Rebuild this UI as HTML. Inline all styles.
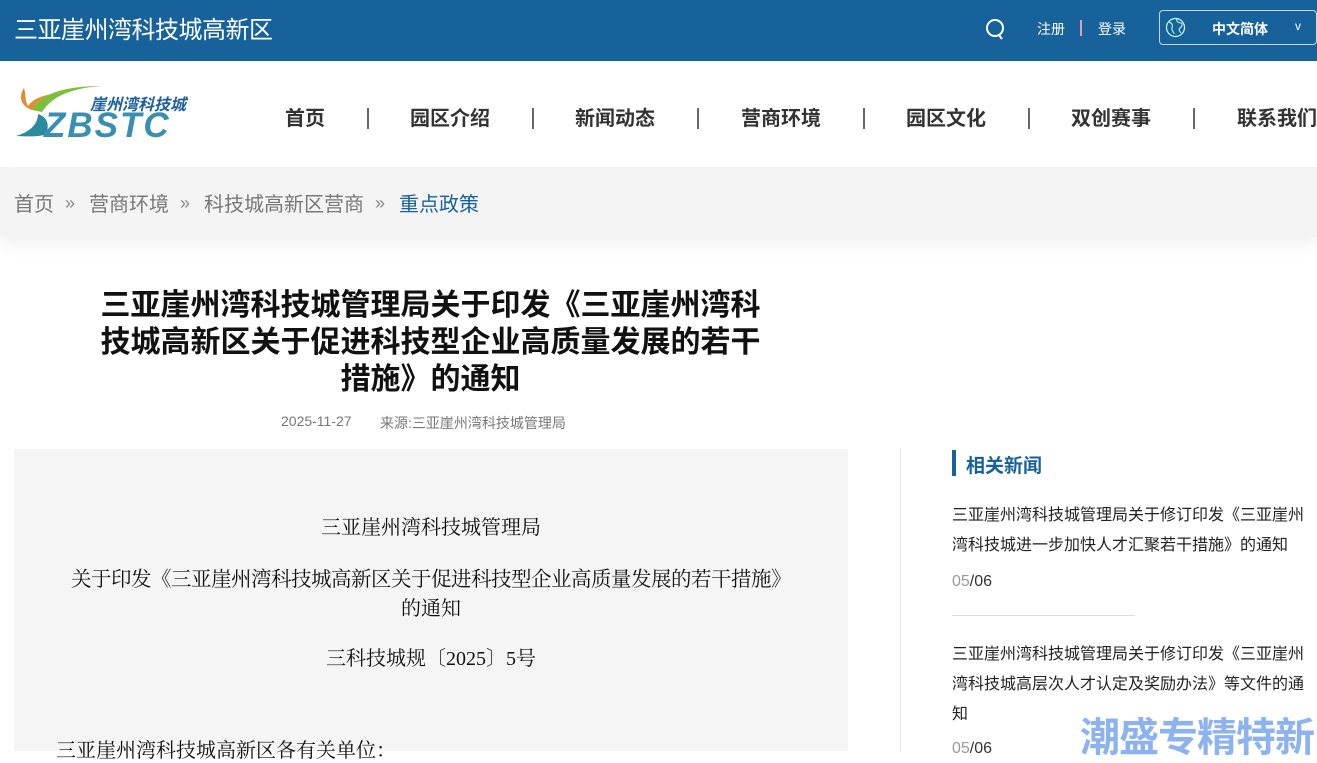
<!DOCTYPE html>
<html><head><meta charset="utf-8"><style>
*{margin:0;padding:0;box-sizing:border-box}
body{width:1317px;height:751px;overflow:hidden;background:#fff;font-family:"Liberation Sans","Noto Sans CJK SC",sans-serif;position:relative;color:#222}
.top{position:absolute;left:0;top:0;width:1317px;height:61px;background:#17629a;color:#fff}
.top .t{position:absolute;left:14px;top:10px;font-size:24px;letter-spacing:-0.5px}
.abs{position:absolute}
.nav{position:absolute;top:102px;font-size:20px;font-weight:bold;color:#333}
.sep{position:absolute;top:108px;width:2px;height:21px;background:#666}
.crumb{position:absolute;left:0;top:167px;width:1317px;height:70px;background:#f4f4f4;box-shadow:0 8px 16px rgba(0,0,0,0.06)}
.crumb span{position:absolute;top:21px;font-size:20px;color:#777}
.crumb b{position:absolute;top:26px;font-size:18px;font-weight:normal;color:#888;font-family:"Liberation Sans",sans-serif}
h1{position:absolute;left:98px;top:287px;width:665px;text-align:center;font-size:30px;line-height:37px;font-weight:bold;color:#111}
.meta{position:absolute;top:413px;font-size:14px;color:#777}
.box{position:absolute;left:14px;top:449px;width:834px;height:302px;background:#f5f5f5;font-family:"Liberation Serif","Noto Serif CJK SC",serif;color:#111}
.box div{position:absolute;width:834px;text-align:center;font-size:20px}
.vl{position:absolute;left:900px;top:449px;width:1px;height:302px;background:#e5e5e5}
.rn{position:absolute;left:952px;width:356px;font-size:16px;line-height:30px;color:#222}
.dt{position:absolute;left:952px;font-size:16px;color:#333}
</style></head><body>
<div class="top"><div class="t">三亚崖州湾科技城高新区</div>
<svg class="abs" style="left:985px;top:18px" width="22" height="24" viewBox="0 0 22 24"><circle cx="10" cy="10" r="8" fill="none" stroke="#fff" stroke-width="2"/><path d="M14 17l3 4" stroke="#fff" stroke-width="2"/></svg>
<div class="abs" style="left:1037px;top:19px;font-size:14px">注册</div>
<div class="abs" style="left:1080px;top:20px;width:2px;height:16px;background:#e0a0b0"></div>
<div class="abs" style="left:1098px;top:19px;font-size:14px">登录</div>
<div class="abs" style="left:1159px;top:10px;width:158px;height:35px;border:1px solid #c9d8e6;border-radius:4px"></div>
<svg class="abs" style="left:1165px;top:17px" width="21" height="21" viewBox="0 0 21 21"><circle cx="10.5" cy="10.5" r="9" fill="none" stroke="#cfe" stroke-width="1.2"/><path d="M4 5c3 1 4 3 3 6s2 3 2 6M12 2c-1 3 2 4 4 4s1 4-1 5 0 4 1 5" fill="none" stroke="#cfe" stroke-width="1"/></svg>
<div class="abs" style="left:1212px;top:19px;font-size:14px;font-weight:bold">中文简体</div>
<div class="abs" style="left:1295px;top:19px;font-size:12px">v</div>
</div>
<svg class="abs" style="left:12px;top:80px" width="190" height="62" viewBox="0 0 190 62">
<path d="M12 8c-6 9-3 18 8 22 4-8 12-14 20-16-12 2-20 6-24 12-3-5-2-10-4-18z" fill="#e58a2f"/>
<path d="M20 30c8-16 32-24 70-24-30 2-50 10-60 26z" fill="#7cbf3b"/>
<path d="M4 56c14-4 22-12 22-22 9 3 12 10 8 20-3 2-12 3-30 2z" fill="#2a8aa0"/>
<text x="78" y="30" font-size="16" font-weight="bold" font-style="italic" fill="#1d5e9c" font-family="Noto Sans CJK SC,sans-serif">崖州湾科技城</text>
<text x="32" y="57" font-size="35" font-style="italic" font-weight="bold" fill="#3a8fb0" font-family="Liberation Sans,sans-serif" letter-spacing="2">ZBSTC</text>
</svg>
<div class="nav" style="left:285px">首页</div><div class="sep" style="left:367px"></div>
<div class="nav" style="left:410px">园区介绍</div><div class="sep" style="left:532px"></div>
<div class="nav" style="left:575px">新闻动态</div><div class="sep" style="left:697px"></div>
<div class="nav" style="left:741px">营商环境</div><div class="sep" style="left:863px"></div>
<div class="nav" style="left:906px">园区文化</div><div class="sep" style="left:1028px"></div>
<div class="nav" style="left:1071px">双创赛事</div><div class="sep" style="left:1193px"></div>
<div class="nav" style="left:1237px;white-space:nowrap">联系我们</div>
<div class="crumb">
<span style="left:14px">首页</span><b style="left:65px">»</b>
<span style="left:89px">营商环境</span><b style="left:180px">»</b>
<span style="left:204px">科技城高新区营商</span><b style="left:375px">»</b>
<span style="left:399px;color:#17629a">重点政策</span></div>
<h1>三亚崖州湾科技城管理局关于印发《三亚崖州湾科技城高新区关于促进科技型企业高质量发展的若干措施》的通知</h1>
<div class="meta" style="left:281px">2025-11-27</div>
<div class="meta" style="left:380px">来源:三亚崖州湾科技城管理局</div>
<div class="box">
<div style="top:62px">三亚崖州湾科技城管理局</div>
<div style="top:113px;font-size:20.5px;letter-spacing:-0.5px">关于印发《三亚崖州湾科技城高新区关于促进科技型企业高质量发展的若干措施》</div>
<div style="top:143px">的通知</div>
<div style="top:193px">三科技城规〔2025〕5号</div>
<div style="top:285px;left:42px;text-align:left">三亚崖州湾科技城高新区各有关单位：</div>
</div>
<div class="vl"></div>
<div class="abs" style="left:952px;top:450px;width:4px;height:26px;background:#17629a"></div>
<div class="abs" style="left:966px;top:451px;font-size:19px;font-weight:bold;color:#17629a">相关新闻</div>
<div class="rn" style="top:501px">三亚崖州湾科技城管理局关于修订印发《三亚崖州湾科技城进一步加快人才汇聚若干措施》的通知</div>
<div class="dt" style="top:573px"><span style="color:#999">05</span>/06</div>
<div class="abs" style="left:952px;top:615px;width:183px;height:1px;background:#ddd"></div>
<div class="rn" style="top:640px">三亚崖州湾科技城管理局关于修订印发《三亚崖州湾科技城高层次人才认定及奖励办法》等文件的通知</div>
<div class="dt" style="top:740px"><span style="color:#999">05</span>/06</div>
<div class="abs" style="left:1080px;top:705px;font-size:40px;font-weight:bold;color:#8db2f0;letter-spacing:-1px;white-space:nowrap">潮盛专精特新</div>
</body></html>
